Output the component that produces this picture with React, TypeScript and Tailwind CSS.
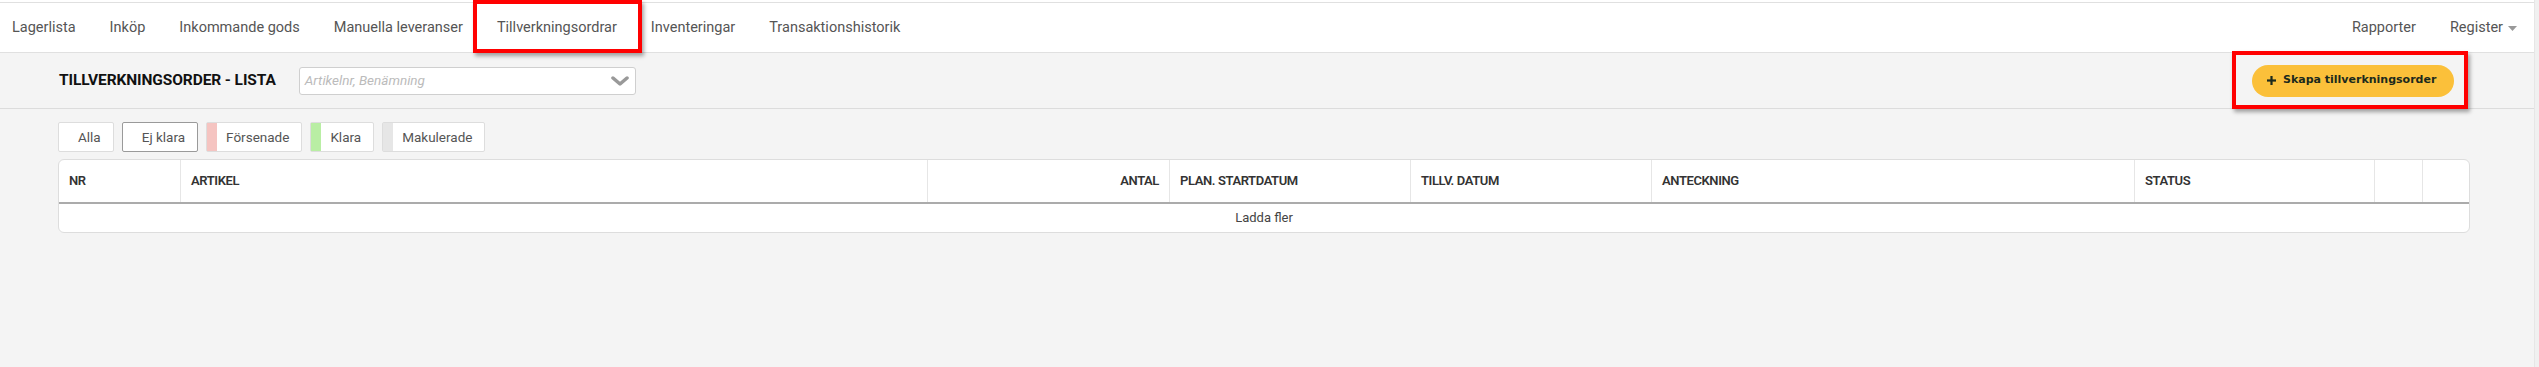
import React from "react";

const navLeft = [
  "Lagerlista",
  "Inköp",
  "Inkommande gods",
  "Manuella leveranser",
  "Tillverkningsordrar",
  "Inventeringar",
  "Transaktionshistorik",
];

const filters = [
  { label: "Alla", stripe: "bg-transparent", active: false },
  { label: "Ej klara", stripe: "bg-transparent", active: true },
  { label: "Försenade", stripe: "bg-[#f5c4c1]", active: false },
  { label: "Klara", stripe: "bg-[#b9eea4]", active: false },
  { label: "Makulerade", stripe: "bg-[#e6e6e6]", active: false },
];

const columns = [
  { label: "NR", align: "text-left" },
  { label: "ARTIKEL", align: "text-left" },
  { label: "ANTAL", align: "text-right" },
  { label: "PLAN. STARTDATUM", align: "text-left" },
  { label: "TILLV. DATUM", align: "text-left" },
  { label: "ANTECKNING", align: "text-left" },
  { label: "STATUS", align: "text-left" },
  { label: "", align: "text-left" },
  { label: "", align: "text-left" },
];

function NavItem({ label, active }: { label: string; active?: boolean }) {
  return (
    <div className="relative flex items-center h-full px-[17px] text-[14.5px] text-[#555]">
      {label}
      {active && <div className="absolute left-[9px] right-[6px] bottom-0 h-[2px] bg-[#226b2c]" />}
    </div>
  );
}

export default function App() {
  return (
    <div className="relative flex w-full h-[367px] bg-white overflow-hidden" style={{ fontFamily: "Roboto, 'Liberation Sans', sans-serif" }}>
      <div className="flex-1 flex flex-col pt-[2px]">
        {/* top navigation */}
        <div className="flex justify-between h-[51px] bg-white border-y border-[#e0e0e0]">
          <div className="flex h-full ml-[-5px]">
            {navLeft.map((item) => (
              <NavItem key={item} label={item} active={item === "Tillverkningsordrar"} />
            ))}
          </div>
          <div className="flex h-full">
            <NavItem label="Rapporter" />
            <div className="flex items-center h-full pl-[17px] pr-[17px] text-[14.5px] text-[#555]">
              Register
              <svg width="9" height="5" viewBox="0 0 9 5" className="ml-[5px] mt-[1px]">
                <path d="M0 0 L9 0 L4.5 5 Z" fill="#999" />
              </svg>
            </div>
          </div>
        </div>

        {/* page content */}
        <div className="flex-1 bg-[#f4f4f4]">
          <div className="flex items-center justify-between h-[56px] pl-[59px] pr-[80px] border-b border-[#dcdcdc]">
            <div className="flex items-center">
              <h1 className="text-[15.5px] font-bold text-[#111] tracking-[-0.1px]">TILLVERKNINGSORDER - LISTA</h1>
              <div className="ml-[23px] flex items-center justify-between w-[337px] h-[28px] bg-white border border-[#cfcfcf] rounded-[3px] pl-[5px] pr-[6px]">
                <span className="text-[13.5px] italic text-[#bbb]">Artikelnr, Benämning</span>
                <svg width="18" height="10" viewBox="0 0 18 10">
                  <path d="M2 2 L9 8 L16 2" fill="none" stroke="#999" strokeWidth="3.5" strokeLinecap="round" strokeLinejoin="round" />
                </svg>
              </div>
            </div>
            <button className="flex items-center h-[32px] w-[202px] rounded-full bg-[#fbc03a] pl-[15px] text-[11px] font-bold text-[#1c2a1d]" style={{ fontFamily: "'DejaVu Sans', sans-serif" }}>
              <svg width="9" height="9" viewBox="0 0 9 9" className="mr-[7px]">
                <rect x="3.4" y="0" width="2.2" height="9" fill="#1c2a1d" />
                <rect x="0" y="3.4" width="9" height="2.2" fill="#1c2a1d" />
              </svg>
              Skapa tillverkningsorder
            </button>
          </div>

          <div className="pl-[58px] pr-[64px] pt-[13px]">
            <div className="flex gap-[8px]">
              {filters.map((f) => (
                <div
                  key={f.label}
                  className={`flex h-[30px] bg-white rounded-[2px] border ${f.active ? "border-[#9a9a9a]" : "border-[#dddddd]"}`}
                >
                  <div className={`w-[10px] h-full ${f.stripe}`} />
                  <div className="flex items-center pl-[9px] pr-[12px] text-[13.5px] text-[#555]">{f.label}</div>
                </div>
              ))}
            </div>

            <div className="mt-[7px] bg-white border border-[#dddddd] rounded-[6px] overflow-hidden">
              <div className="grid grid-cols-[121px_747px_242px_241px_241px_483px_240px_48px_1fr] h-[44px] border-b-2 border-[#ababab]">
                {columns.map((c, i) => (
                  <div
                    key={i}
                    className={`flex items-center px-[10px] text-[13px] font-semibold tracking-[-0.4px] text-[#333] ${c.align === "text-right" ? "justify-end" : ""} ${i > 0 ? "border-l border-[#e6e6e6]" : ""}`}
                  >
                    {c.label}
                  </div>
                ))}
              </div>
              <div className="flex items-center justify-center h-[28px] text-[13px] text-[#444]">Ladda fler</div>
            </div>
          </div>
        </div>
      </div>

      {/* scrollbar strip */}
      <div className="w-[5px] h-full bg-[#f0f0f0] border-l border-[#e6e6e6]" />

      {/* red annotation boxes */}
      <div className="absolute left-[473px] top-0 w-[169px] h-[53px] border-4 border-[#ff0000] shadow-[2px_3px_4px_rgba(0,0,0,0.35)]" />
      <div className="absolute left-[2232px] top-[51px] w-[236px] h-[58px] border-4 border-[#ff0000] shadow-[2px_3px_4px_rgba(0,0,0,0.35)]" />
    </div>
  );
}
